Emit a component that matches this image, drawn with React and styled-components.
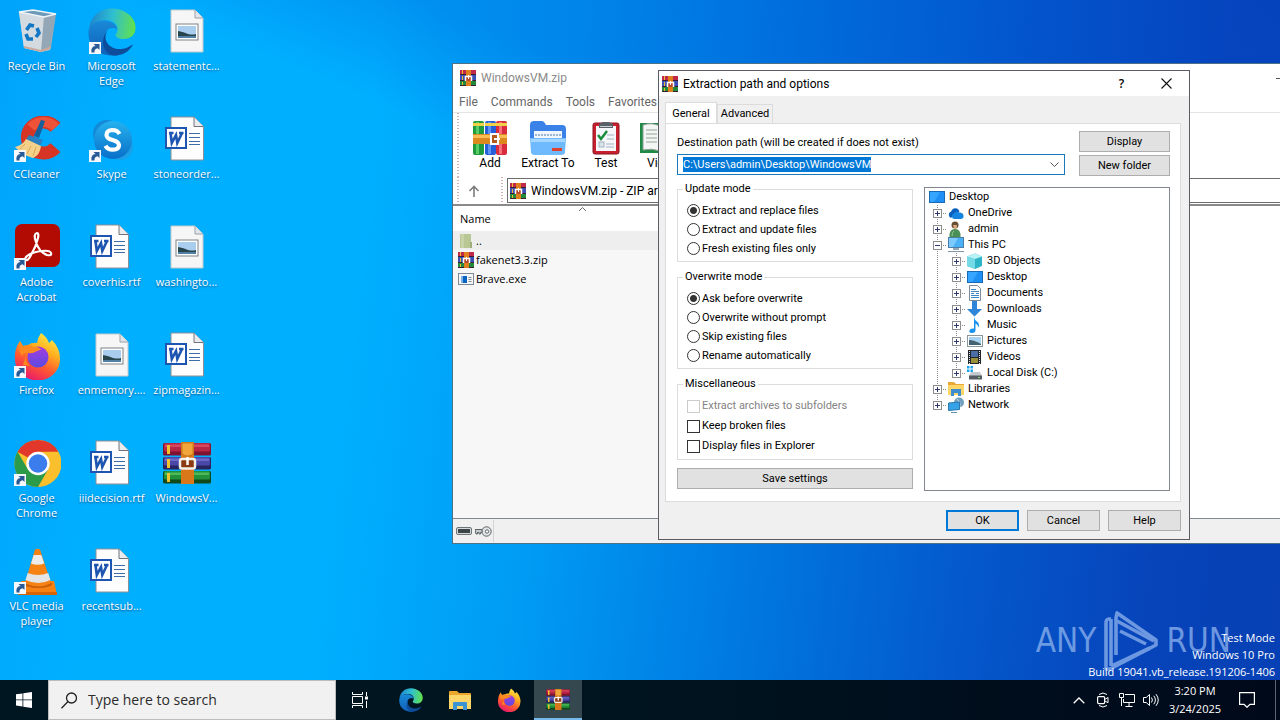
import React, { useEffect, useId, useRef } from "react";
import styled, { createGlobalStyle, css } from "styled-components";

const ui = `Roboto, "Noto Sans", sans-serif`;
const shell = `"Open Sans", "Noto Sans", sans-serif`;

const Global = createGlobalStyle`
  *, *::before, *::after { box-sizing: border-box; }
  body { margin: 0; font: 11px/16px ${ui}; color: #000; overflow: hidden; }
  button, input { font: inherit; color: inherit; margin: 0; }
  svg { display: block; flex: none; }
  ::selection { background: #0078d7; color: #fff; }
`;

/* ---------- desktop ---------- */

const Screen = styled.div`
  position: relative;
  height: 100vh;
  overflow: hidden;
  display: flex;
  flex-direction: column;
  background:
    linear-gradient(22deg, rgba(0, 80, 210, 0) 62%, rgba(0, 80, 210, 0.3) 72%, rgba(0, 70, 200, 0.3) 100%),
    linear-gradient(97deg, #00a4fb 0%, #00b0ff 12%, #00b0ff 28%, #009cf4 43%, #0078e0 60%, #0458cc 76%, #0743b9 90%, #0640b4 100%);
`;

const IconGrid = styled.main`
  flex: 1;
  display: grid;
  grid-auto-flow: column;
  grid-template-rows: repeat(6, 108px);
  grid-auto-columns: 75px;
  justify-content: start;
  align-content: start;
`;

const Shortcut = styled.a`
  display: flex;
  flex-direction: column;
  align-items: center;
  gap: 2px;
  padding: 8px 2px 0 0;
  color: #fff;
  text-decoration: none;
  text-align: center;
  font: 11px/15px ${shell};
  text-shadow: 0 1px 2px rgba(0, 40, 90, 0.7);
`;

/* ---------- desktop icon drawings ---------- */

const Arrow = () => (
  <g>
    <rect x="1" y="34" width="12" height="12" fill="#f4f8fc" />
    <path d="M3.500 44.500q-1-6 4-6.500L5.500 36h6v6l-1.800-1.800q-3.500.5-3.200 4.300z" fill="#2a5a96" />
  </g>
);

const Recycle = () => (
  <svg width="48" height="48" viewBox="0 0 48 48">
    <path d="M6 4L42 8 37 42 28 44 11 40z" fill="#c3ccd4" />
    <path d="M6 4L31 9 28 44 11 40z" fill="#d3dae0" />
    <path d="M31 9L43 6 38 40 28 44z" fill="#93a7b6" />
    <path d="M6 4L20 2 43 6 31 9z" fill="#6d9ab8" stroke="#eef4f8" strokeWidth="1.500" />
    <path d="M11 38l17 4 10-4-.5 3L28 44l-17-4z" fill="#c8a99a" />
    <g fill="none" stroke="#1277c4" strokeWidth="3.600">
      <path d="M13.500 22l3.500-5 4 1" />
      <path d="M24 20l2 5-3 4" />
      <path d="M20 31h-5l-2-5" />
    </g>
  </svg>
);

const EdgeShape = () => {
  const id = useId();
  return (
    <g>
      <defs>
        <linearGradient id={id + "a"} x1="0" y1=".3" x2="1" y2=".4">
          <stop offset="0" stopColor="#1d84cf" /><stop offset=".5" stopColor="#2fbfd0" /><stop offset="1" stopColor="#62e04e" />
        </linearGradient>
        <linearGradient id={id + "b"} x1="0" y1="0" x2="0" y2="1">
          <stop offset="0" stopColor="#1a8ad8" /><stop offset="1" stopColor="#0f5fb8" />
        </linearGradient>
      </defs>
      <path d="M1 22C2 8 12 .5 24 .5S48 9 47.500 20c0 7-5 11-12 11-5 0-8-2-8-4 0-1 2-2 2-6 0-5-5-9-11-9C10 12 3 16 1 22z" fill={`url(#${id}a)`} />
      <path d="M.5 24c0-7 7-11.500 16-11.500 6 0 12 3.500 13 9-8-4-13 1-13 9 0 9 6 15 14 17C12 49 0 40 .5 24z" fill={`url(#${id}b)`} />
      <path d="M20 22c-7 10 2 20 13 19 5 0 9-3 12-4.500-4 8-12 11.500-20 10.800-10-2.300-14-15.300-5-25.300z" fill="#0d4d9b" />
    </g>
  );
};

const Edge = ({ size = 48, badge }) => (
  <svg width={size} height={size} viewBox="0 0 48 48"><EdgeShape />{badge && <Arrow />}</svg>
);

const CCleaner = () => (
  <svg width="48" height="48" viewBox="0 0 48 48">
    <path d="M42.500 11.400A16 15.500 0 1 0 42.500 31.600" fill="none" stroke="#d63424" strokeWidth="13" />
    <path d="M42.500 11.400A16 15.500 0 0 0 18 11.500" fill="none" stroke="#ee5238" strokeWidth="10" />
    <path d="M28 4l4 1-6 17-5-2z" fill="#15609c" />
    <path d="M16 19l14 5-3 6-14-6z" fill="#2a7fc0" />
    <path d="M13 23l15 7q-1 9-8 12Q9 39 2 31q8-2 11-8z" fill="#f5d089" />
    <path d="M12 28l-5 5M18 30l-4 8M23 31l-3 9" stroke="#d9a95c" />
    <Arrow />
  </svg>
);

const Skype = () => {
  const id = useId();
  return (
    <svg width="48" height="48" viewBox="0 0 48 48">
      <defs>
        <linearGradient id={id} x1="0" y1="0" x2="0" y2="1">
          <stop offset="0" stopColor="#25b1ee" /><stop offset="1" stopColor="#0a6fc9" />
        </linearGradient>
      </defs>
      <circle cx="19" cy="18" r="14" fill="#1389d8" /><circle cx="32" cy="31" r="13" fill="#1aa0e6" />
      <circle cx="25" cy="24" r="19" fill={`url(#${id})`} />
      <path d="M31.500 18q-2-4-7-4-6 .3-6 5 0 3.500 6 5t6.500 5q0 4.500-6 4.700-5.500 0-7.500-4" fill="none" stroke="#fff" strokeWidth="4.200" />
      <Arrow />
    </svg>
  );
};

const Acrobat = () => (
  <svg width="48" height="48" viewBox="0 0 48 48">
    <rect x="2" y="0" width="45" height="43" rx="7" fill="#b10b04" />
    <path d="M24 9q-4 1-1 9 3 10 11 13 5 1 4-2t-9-2q-10 1-15 5-3 3-1 4t5-5Q23 23 25 14q1-5-1-5z" fill="none" stroke="#fff" strokeWidth="2.200" />
    <Arrow />
  </svg>
);

const FirefoxShape = () => {
  const id = useId();
  return (
    <g>
      <defs>
        <linearGradient id={id + "a"} x1=".8" y1="0" x2=".3" y2="1">
          <stop offset="0" stopColor="#fff04a" /><stop offset=".35" stopColor="#ffb01f" /><stop offset=".65" stopColor="#ff5a30" /><stop offset="1" stopColor="#e8156f" />
        </linearGradient>
        <linearGradient id={id + "b"} x1="0" y1="0" x2="0" y2="1">
          <stop offset="0" stopColor="#a43ce0" /><stop offset="1" stopColor="#5a4be0" />
        </linearGradient>
      </defs>
      <path d="M28 1q6 4 8 10l3-3q8 8 8 19A22.500 21 0 0 1 2 28Q1 17 7 9l3 5 5-1q4-3 9-2Q25 5 28 1z" fill={`url(#${id}a)`} />
      <circle cx="25" cy="25" r="10.500" fill={`url(#${id}b)`} />
      <path d="M7 9q-3 9 2 15 2-4 7-3 3 1 8-2 4-1 4-2-4-3-8-2-2-2-5-2l-5 1zM13 24q-1 6 4 10l-7-1z" fill="#ff8a1f" />
    </g>
  );
};

const Firefox = ({ size = 48, badge }) => (
  <svg width={size} height={size} viewBox="0 0 48 48"><FirefoxShape />{badge && <Arrow />}</svg>
);

const Chrome = () => (
  <svg width="48" height="48" viewBox="0 0 48 48">
    <circle cx="25" cy="23.500" r="23.500" fill="#f9bf2c" />
    <path d="M25 0A23.500 23.500 0 0 1 45.400 11.800H25L14.800 17.600 4.600 11.800A23.500 23.500 0 0 1 25 0z" fill="#e1382b" />
    <path d="M4.600 11.800A23.500 23.500 0 0 0 25 47L35.200 29.300 25 35.200 14.800 29.300z" fill="#2b9b49" />
    <circle cx="25" cy="23.500" r="11.700" fill="#fff" /><circle cx="25" cy="23.500" r="9.300" fill="#3b7ded" />
    <Arrow />
  </svg>
);

const Vlc = () => (
  <svg width="48" height="48" viewBox="0 0 48 48">
    <path d="M8 33h33l3 14H5z" fill="#f58213" /><path d="M5 44h39v3H5z" fill="#d96405" />
    <ellipse cx="25" cy="36" rx="14" ry="4" fill="#c95d0a" />
    <path d="M22 1.500q2.500-1.500 5 0L38 35q-12 7-26 0z" fill="#f58213" />
    <path d="M20.700 7h7.600l3 8.500q-6.500 2.500-13.300 0z" fill="#ececec" />
    <path d="M14.700 25q10 4 20.500 0l2.300 7q-12 6-25 0z" fill="#e4e4e4" />
    <Arrow />
  </svg>
);

const WordDoc = () => (
  <svg width="48" height="48" viewBox="0 0 48 48">
    <path d="M8 1h23l9.500 9.500V44H8z" fill="#fdfdfd" stroke="#8b8f96" />
    <path d="M31 1v9.500h9.500" fill="#e9ebee" stroke="#6f747c" />
    <rect x="3" y="12" width="20" height="20" fill="#fff" stroke="#1d55b0" strokeWidth="2" />
    <path d="M7.500 17l1.300 10 4.200-8 1.300 8 4.700-10M6 17h4.500M16 17h4.500" fill="none" stroke="#1d55b0" strokeWidth="2.600" />
    <path d="M26 17.500h11M26 21.500h11M26 25.500h11M26 28.500h11" stroke="#3f6da8" />
  </svg>
);

const PictureDoc = () => (
  <svg width="48" height="48" viewBox="0 0 48 48">
    <path d="M8 2h24l8 8v34H8z" fill="#f6f6f6" stroke="#c3c8cc" />
    <path d="M32 2v8h8" fill="#e2e6ea" stroke="#9aa1a8" />
    <rect x="13" y="16" width="22" height="16" fill="#fff" stroke="#7a8288" />
    <rect x="15" y="18" width="18" height="12" fill="#a9cdee" />
    <path d="M15 23q6 1 10 3 5 1 8 0v4H15z" fill="#28454d" /><path d="M15 28h18v2H15z" fill="#527fa4" />
  </svg>
);

const Books = () => (
  <g>
    {[["#7f1230", "#b82645", "#d8485f", 3], ["#27245f", "#4a47a8", "#6c69c8", 17], ["#11491d", "#23903a", "#4fb95a", 31]].map(([dark, mid, light, y]) => (
      <g key={y}>
        <rect x="0" y={y} width="48" height="12.500" rx="1.500" fill={dark} />
        <rect x="1" y={y} width="46" height="8.500" rx="1.500" fill={mid} />
        <rect x="2" y={y + 1.500} width="44" height="2.500" fill={light} />
        <rect x="4" y={y + 2} width="3" height="9" fill="#f2c12e" />
      </g>
    ))}
    <rect x="18" y="2" width="13" height="42" fill="#d9781b" />
    <path d="M19 3h11v11q-5.500 4-11 0z" fill="#f0a63a" stroke="#c87a1c" />
    <rect x="17" y="19" width="15" height="9.500" rx="2" fill="#8b3a12" stroke="#f2eee8" strokeWidth="2.500" />
    <path d="M24.500 17v8" stroke="#fff" strokeWidth="2.500" />
  </g>
);

const Rar = ({ size = 48 }) => (
  <svg width={size} height={size} viewBox="0 0 48 48"><Books /></svg>
);

const RarSmall = ({ size = 16 }) => (
  <svg width={size} height={size} viewBox="0 0 16 16">
    <rect width="16" height="5" fill="#c02a48" /><rect y="5" width="16" height="6" fill="#3b4fb4" /><rect y="11" width="16" height="5" fill="#228a3a" />
    <path d="M0 4.500h16M0 10.500h16M0 15.500h16" stroke="#3a1c34" />
    <path d="M2.500 0v4M2.500 6v4M2.500 12v3" stroke="#f0c030" />
    <rect x="6" width="5" height="16" fill="#e0801c" />
    <path d="M5.500 11V6.500h6V11" fill="#b5482a" stroke="#fff" strokeWidth="1.500" /><path d="M8.500 5v4" stroke="#fff" />
  </svg>
);

/* ---------- archive window ---------- */

const ArchiveWindow = styled.section`
  position: absolute;
  left: 452px;
  right: -25px;
  top: 63px;
  height: 481px;
  display: flex;
  flex-direction: column;
  background: #fff;
  border: 1px solid #4f7186;
  font: 12px/16px ${ui};
`;

const WinTitle = styled.header`
  display: flex;
  align-items: center;
  height: 28px;
  padding-left: 7px;
  gap: 5px;
  color: #8a8a8a;
`;

const Minimise = styled.button`
  margin-left: auto;
  width: 46px;
  height: 28px;
  border: 0;
  padding: 0 18px;
  background: none;
`;

const MenuBar = styled.nav`
  display: flex;
  gap: 13px;
  height: 21px;
  padding: 2px 6px 2px;
  border-bottom: 1px solid #e4e4e4;
  button { border: 0; padding: 0; background: none; color: #666; }
`;

const grip = css`
  background-image: repeating-linear-gradient(#d2b4b4 0 1px, #fff 1px 3px);
  background-repeat: no-repeat;
`;

const Toolbar = styled.div`
  ${grip}
  background-size: 2px 100%;
  background-position: 4px 0;
  display: flex;
  align-items: flex-start;
  height: 64px;
  padding: 8px 0 0 10px;
`;

const Tool = styled.button`
  width: ${(p) => (p.$wide ? 62 : 54)}px;
  display: flex;
  flex-direction: column;
  align-items: center;
  padding: 0;
  border: 0;
  background: none;
  white-space: nowrap;
`;

const AddressRow = styled.div`
  ${grip}
  background-size: 2px 100%, 2px 100%;
  background-image: repeating-linear-gradient(#d2b4b4 0 1px, #fff 1px 3px), repeating-linear-gradient(#d2b4b4 0 1px, #fff 1px 3px);
  background-position: 4px 0, 48px 0;
  display: flex;
  align-items: center;
  height: 27px;
`;

const UpButton = styled.button`
  width: 54px;
  display: flex;
  justify-content: center;
  padding: 0 12px 0 0;
  border: 0;
  background: none;
`;

const Address = styled.div`
  flex: 1;
  display: flex;
  align-items: center;
  gap: 5px;
  height: 25px;
  padding-left: 2px;
  border: 1px solid #6d6d6d;
  input { flex: 1; border: 0; padding: 0; background: none; outline: none; }
`;

const FileArea = styled.div`
  flex: 1;
  border-top: 2px solid #8a8a8a;
  border-bottom: 1px solid #828790;
  background: linear-gradient(90deg, #f7f7f7 260px, #fff 260px);
`;

const FileTable = styled.table`
  width: 260px;
  border-collapse: collapse;
  font: 11px/19px ${shell};
  th { position: relative; height: 25px; padding: 0 0 0 7px; text-align: left; font-weight: 400; background: #fff; }
  th svg { position: absolute; left: 125px; top: 0; }
  td { height: 19px; padding: 0 0 0 5px; }
  td > span { display: flex; align-items: center; gap: 2px; }
`;

const FileRow = styled.tr`
  background: ${(p) => (p.$active ? "#eeeeee" : "none")};
`;

const StatusBar = styled.footer`
  display: flex;
  align-items: center;
  height: 24px;
  background: #f0f0f0;
`;

const StatusIcons = styled.div`
  display: flex;
  align-items: center;
  gap: 3px;
  height: 22px;
  padding: 0 1px 0 3px;
  border-right: 1px solid #d4d4d4;
`;

const AddIcon = () => (
  <svg width="34" height="34" viewBox="0 0 34 34">
    {[["#1f9a3c", "#6fe27a", 0], ["#2560d8", "#76a8ff", 12], ["#d92b3c", "#ff8f97", 23]].map(([a, b, x]) => (
      <g key={x}><rect x={x} width="11" height="34" rx="2" fill={a} /><rect x={x + 3} y="1" width="3" height="32" fill={b} opacity=".7" /><rect x={x} y="2" width="11" height="3" fill="#f0d048" /></g>
    ))}
    <rect y="13" width="34" height="10" fill="#dc8a1f" /><path d="M0 14h34v3H0z" fill="#f8bd55" />
    <path d="M18 13h7v10h-7z" fill="#b05a1d" stroke="#fff" strokeWidth="2" /><path d="M21 18h6" stroke="#fff" strokeWidth="2" />
  </svg>
);

const ExtractIcon = () => (
  <svg width="36" height="34" viewBox="0 0 36 34">
    <path d="M0 4q0-4 4-4h8q2 0 4 4h16q4 0 4 4v10H0z" fill="#3b82e8" />
    <rect x="4" y="10" width="28" height="12" fill="#f1f6fd" /><path d="M5 14h26" stroke="#9db5d2" strokeWidth="2" strokeDasharray="2 1" />
    <path d="M0 17h36l-1 14q0 3-4 3H5q-4 0-4-3z" fill="#6fbaff" /><path d="M1 18h34v3H1z" fill="#a5d6ff" /><rect x="22" y="27" width="10" height="3" fill="#e0402c" />
  </svg>
);

const TestIcon = () => (
  <svg width="28" height="34" viewBox="0 0 28 34">
    <rect x="1" y="2" width="26" height="31" rx="2" fill="#c7202f" stroke="#8e1220" />
    <rect x="4" y="5" width="20" height="25" fill="#f5f7fa" />
    <path d="M7 7V3l4-2h6l4 2v4z" fill="#5a6068" /><path d="M8 5.500h12" stroke="#c9cfd6" />
    <path d="M6 14l3 4 6-8" fill="none" stroke="#1c8a3b" strokeWidth="2.500" />
    <path d="M15 14h7M15 18h7M14 23h8M14 26h8" stroke="#a5b2c0" /><rect x="7" y="21" width="5" height="5" fill="#dbe3ea" stroke="#a5b2c0" />
  </svg>
);

const ViewIcon = () => (
  <svg width="40" height="34" viewBox="0 0 40 34">
    <path d="M0 2h40v30H0z" fill="#1f8a46" /><path d="M3 4q9-3 17 1v25q-8-3-17-1zM37 4q-9-3-17 1v25q8-3 17-1z" fill="#f3f6f4" stroke="#8fa097" />
    <path d="M6 9h11M6 13h11M6 17h11M6 21h11M23 9h11M23 13h11M23 17h11" stroke="#93a39b" />
  </svg>
);

const FolderUp = () => (
  <svg width="16" height="16" viewBox="0 0 16 16"><path d="M2 1h11v14H2z" fill="#b9c795" /><path d="M3 1h3v14H3z" fill="#c8d3a8" /><path d="M12 9h2v6h-2z" fill="#9db07a" /></svg>
);

const ExeIcon = () => (
  <svg width="16" height="16" viewBox="0 0 16 16">
    <rect x=".5" y="2.500" width="15" height="11" fill="#f4f6f8" stroke="#7f8a94" /><rect x="3" y="5" width="6" height="7" fill="#0a63c0" /><path d="M3 5h2v7H3z" fill="#7fb3e6" /><path d="M10.500 6.500h3M10.500 8.500h3M10.500 10.500h3" stroke="#7d8993" />
  </svg>
);

const tools = [["Add", AddIcon], ["Extract To", ExtractIcon, true], ["Test", TestIcon], ["View", ViewIcon]];
const files = [["..", FolderUp], ["fakenet3.3.zip", RarSmall], ["Brave.exe", ExeIcon]];

const Archive = () => (
  <ArchiveWindow aria-label="WindowsVM.zip">
    <WinTitle>
      <RarSmall /><span>WindowsVM.zip</span>
      <Minimise aria-label="Minimise"><svg width="10" height="1" viewBox="0 0 10 1"><rect width="10" height="1" fill="#555" /></svg></Minimise>
    </WinTitle>
    <MenuBar>{["File", "Commands", "Tools", "Favorites"].map((m) => <button key={m}>{m}</button>)}</MenuBar>
    <Toolbar>
      {tools.map(([name, Icon, wide]) => <Tool key={name} $wide={wide}><Icon />{name}</Tool>)}
    </Toolbar>
    <AddressRow>
      <UpButton aria-label="Up one level">
        <svg width="12" height="12" viewBox="0 0 12 12"><path d="M6 12V1.500M1.500 6L6 1.500 10.500 6" fill="none" stroke="#7c7c7c" strokeWidth="1.600" /></svg>
      </UpButton>
      <Address><RarSmall /><input aria-label="Archive path" readOnly tabIndex={-1} value="WindowsVM.zip - ZIP archive" /></Address>
    </AddressRow>
    <FileArea>
      <FileTable>
        <thead><tr><th>Name<svg width="9" height="6" viewBox="0 0 9 6"><path d="M1 5l3.500-3.500L8 5" fill="none" stroke="#666" /></svg></th></tr></thead>
        <tbody>
          {files.map(([name, Icon], i) => <FileRow key={name} $active={i === 0}><td><span><Icon />{name}</span></td></FileRow>)}
        </tbody>
      </FileTable>
    </FileArea>
    <StatusBar>
      <StatusIcons>
        <svg width="16" height="8" viewBox="0 0 16 8"><rect x=".5" y=".5" width="15" height="7" rx="1.500" fill="#d5dadd" stroke="#6d7478" /><rect x="2" y="2" width="12" height="4" fill="#3d4448" /></svg>
        <svg width="17" height="11" viewBox="0 0 17 11"><circle cx="11.500" cy="5.500" r="4.700" fill="#e2e5e7" stroke="#5c6367" /><circle cx="12" cy="5.500" r="1.700" fill="#fff" stroke="#5c6367" /><path d="M0 3.500h7v3H5.500V8H4V6.500H2.500V8H1z" fill="#c6cbce" stroke="#5c6367" /></svg>
      </StatusIcons>
    </StatusBar>
  </ArchiveWindow>
);

/* ---------- extraction dialog ---------- */

const DialogWindow = styled.section`
  position: absolute;
  left: 658px;
  top: 70px;
  width: 532px;
  height: 470px;
  display: flex;
  flex-direction: column;
  background: #f0f0f0;
  border: 1px solid #5b5b63;
`;

const DialogTitle = styled.header`
  display: flex;
  align-items: center;
  height: 25px;
  padding-left: 3px;
  background: #fff;
  font-size: 12px;
  span { margin-left: 5px; }
`;

const TitleButton = styled.button`
  width: 45px;
  height: 24px;
  display: flex;
  align-items: center;
  justify-content: center;
  border: 0;
  padding: 0;
  background: none;
  font: 600 12px/16px ${shell};
  &:first-of-type { margin-left: auto; }
`;

const Body = styled.div`
  flex: 1;
  display: flex;
  flex-direction: column;
  padding: 6px 8px 8px 6px;
`;

const Tabs = styled.div`
  display: flex;
  align-items: flex-end;
`;

const Tab = styled.button`
  height: ${(p) => (p.$on ? 22 : 19)}px;
  width: ${(p) => (p.$on ? 52 : 56)}px;
  margin-bottom: ${(p) => (p.$on ? "-1px" : "0")};
  padding: 0;
  border: 1px solid #dcdcdc;
  border-bottom-width: 0;
  background: ${(p) => (p.$on ? "#fff" : "#f0f0f0")};
`;

const Page = styled.div`
  flex: 1;
  display: flex;
  flex-direction: column;
  gap: 6px;
  padding: 7px 10px 10px 11px;
  border: 1px solid #dcdcdc;
  background: #fff;
`;

const PathRow = styled.div`
  display: flex;
  gap: 14px;
`;

const PathField = styled.div`
  flex: 1;
  display: flex;
  flex-direction: column;
  gap: 3px;
  padding-top: 4px;
`;

const Combo = styled.div`
  display: flex;
  align-items: center;
  height: 21px;
  padding: 0 1px 0 5px;
  border: 1px solid #1a78bd;
  input { flex: 1; border: 0; padding: 0; height: 15px; background: none; outline: none; }
  button { display: flex; border: 0; padding: 4px; background: none; }
`;

const Stack = styled.div`
  display: flex;
  flex-direction: column;
  gap: 3px;
  width: 91px;
`;

const PushButton = styled.button`
  height: 21px;
  padding: 0;
  border: ${(p) => (p.$primary ? "2px solid #0078d7" : "1px solid #adadad")};
  background: #e1e1e1;
`;

const Columns = styled.div`
  flex: 1;
  display: flex;
  gap: 11px;
`;

const Options = styled.div`
  width: 236px;
  display: flex;
  flex-direction: column;
  gap: 8px;
`;

const Group = styled.fieldset`
  margin: 0;
  padding: 5px 9px 3px;
  border: 1px solid #dcdcdc;
  legend { padding: 0 2px; margin-left: -4px; line-height: 14px; }
`;

const Choice = styled.label`
  display: flex;
  align-items: center;
  gap: 2px;
  height: ${(p) => (p.$tall ? 20 : 19)}px;
  color: ${(p) => (p.$off ? "#838383" : "#000")};
`;

const Mark = styled.input`
  appearance: none;
  width: 13px;
  height: 13px;
  border: 1px solid #333;
  border-radius: ${(p) => (p.type === "radio" ? "50%" : "0")};
  background: #fff;
  &:checked { background: radial-gradient(circle, #333 3px, #fff 4px); }
  &:disabled { border-color: #ccc; }
`;

const TreeWrap = styled.div`
  flex: 1;
  display: flex;
  padding-top: 5px;
`;

const Tree = styled.ul`
  flex: 1;
  margin: 0;
  padding: 1px 3px;
  border: 1px solid #828790;
  list-style: none;
`;

const Node = styled.li`
  display: flex;
  align-items: center;
  height: 16px;
  line-height: 18px;
  > svg { margin-right: 3px; }
`;

const dots = "repeating-linear-gradient(#8a8a8a 0 1px, transparent 1px 2px)";
const Branch = styled.span`
  width: 19px;
  height: 16px;
  display: flex;
  align-items: center;
  padding-left: 5px;
  background:
    ${dots} 9px 0 / 1px ${(p) => (p.$last ? "8px" : "100%")} no-repeat
    ${(p) => (p.$line ? "" : ", repeating-linear-gradient(90deg, #8a8a8a 0 1px, transparent 1px 2px) 9px 8px / 10px 1px no-repeat")};
`;

const Toggle = styled.button`
  display: flex;
  border: 0;
  padding: 1px 0 0;
  background: none;
`;

const Expander = ({ open, label }) => (
  <Toggle aria-label={(open ? "Collapse " : "Expand ") + label} aria-expanded={!!open}>
    <svg width="9" height="9" viewBox="0 0 9 9"><rect x=".5" y=".5" width="8" height="8" fill="#fff" stroke="#8d8d8d" /><path d={open ? "M2 4.500h5" : "M2 4.500h5M4.500 2v5"} stroke="#303a70" /></svg>
  </Toggle>
);

const glyphs = {
  desktop: <><rect x="1.500" y="2.500" width="15" height="11" fill="#1e90f5" stroke="#176ab5" /><path d="M2 3h10L6 13H2z" fill="#35a5ff" /></>,
  onedrive: <><path d="M4 13a3.500 3.500 0 0 1 0-6.500Q6 2 10 3.500q2 1 2.500 3L8 9z" fill="#0a5fbd" /><path d="M7 14a3 3 0 0 1-.5-5.500Q9 5.500 12.500 7.500q3.500 0 4 3 .5 3-2.500 3.500z" fill="#1484e0" /></>,
  user: <><circle cx="8" cy="4" r="3.500" fill="#6a4d35" /><path d="M6 4h4q0 4-1.500 4.500T6 4z" fill="#d9a97e" /><path d="M2.500 16q-.5-8 5.500-8t5.500 8z" fill="#4a8f55" /><path d="M5 15q0-4 2-5" stroke="#8cc794" fill="none" /></>,
  pc: <><rect x="1.500" y=".5" width="15" height="10" fill="#4bb0f5" stroke="#4b7fa8" /><path d="M2 1h9l-5 9H2z" fill="#7ccaff" /><path d="M6 11h6v2H6z" fill="#9aa8b3" /><path d="M1 14.500h16" stroke="#8497a4" /></>,
  cube: <><path d="M1 3.500L9 .5l7 3v9.500l-7 3-8-3z" fill="#2db3c6" /><path d="M1 3.500L9 6v10l-8-3z" fill="#74dbe6" /><path d="M1 3.500L9 .5l7 3L9 6z" fill="#b7f2f5" /></>,
  doc: <><path d="M3.500.5h8l3 3v12h-11z" fill="#fdfdfd" stroke="#7d8b96" /><path d="M5 4.500h5M5 6.500h8M5 8.500h3M10 8.500h3M5 10.500h8M5 12.500h8" stroke="#3b87c8" /></>,
  down: <path d="M6 0h5v8h5L8.500 15.500 1 8h5z" fill="#2f86d8" />,
  music: <path d="M8 0q.5 3 3 4.500 3 2.500 1.500 6-.5-3-3-4v6.500q0 3-3.500 3t-2.500-2.500Q4 11 8 11.500z" fill="#1b93ee" />,
  picture: <><rect x="1.500" y="2.500" width="15" height="11" fill="#fff" stroke="#8b979f" /><rect x="3" y="4" width="12" height="8" fill="#a8d2f0" /><path d="M3 7q5 0 12 4v1H3z" fill="#43616f" /></>,
  film: <><rect x="2" y="1" width="13" height="14" fill="#23262c" /><rect x="5" y="2" width="7" height="6" fill="#4b6fa5" /><rect x="5" y="9" width="7" height="5" fill="#9a8f3a" /><path d="M3.500 2v13M13.500 2v13" stroke="#e8e8e8" strokeDasharray="1 1" /></>,
  disk: <><path d="M1 1h2.500v2.500H1zM4.500 1H7v2.500H4.500zM1 4.500h2.500V7H1zM4.500 4.500H7V7H4.500z" fill="#1aa5f0" /><path d="M5 7h9l2 4H3z" fill="#c4c9cd" /><path d="M3 10.500h13v4H3z" fill="#555c62" /><rect x="12" y="12" width="2" height="1" fill="#6fe06f" /></>,
  library: <><path d="M1 1h6l2 2h8v11H1z" fill="#e9a838" /><path d="M1 4h16v10H1z" fill="#fcd667" /><path d="M4 15V8h10v7h-3v-3H7v3z" fill="#3d8ed0" /></>,
  network: <><circle cx="12" cy="5.500" r="5" fill="#6f9fbc" /><path d="M10 2q4 3 3 8" stroke="#c6dfec" fill="none" /><path d="M1.500 6l11-1v7.500l-11 1z" fill="#35a3e8" stroke="#2c77ab" /><path d="M4 15.500h6" stroke="#5d8fae" /></>,
};

const Glyph = ({ name }) => <svg width="18" height="16" viewBox="0 0 18 16">{glyphs[name]}</svg>;

const tree = [
  [0, "Desktop", "desktop"], [1, "OneDrive", "onedrive"], [1, "admin", "user"], [1, "This PC", "pc", { open: true }],
  [2, "3D Objects", "cube"], [2, "Desktop", "desktop"], [2, "Documents", "doc"], [2, "Downloads", "down"], [2, "Music", "music"],
  [2, "Pictures", "picture"], [2, "Videos", "film"], [2, "Local Disk (C:)", "disk", { last: true }],
  [1, "Libraries", "library"], [1, "Network", "network", { last: true }],
];

const OptionGroup = ({ title, type, items }) => (
  <Group>
    <legend>{title}</legend>
    {items.map(([text, state], i) => (
      <Choice key={text} $off={state === "off"} $tall={type === "checkbox"}>
        <Mark type={type} name={title} defaultChecked={type === "radio" && i === 0} disabled={state === "off"} />{text}
      </Choice>
    ))}
  </Group>
);

const Buttons = styled.footer`
  display: flex;
  justify-content: flex-end;
  gap: 8px;
  padding-top: 8px;
  button { width: 73px; }
`;

const Dialog = () => {
  const path = useRef(null);
  useEffect(() => { path.current.focus(); path.current.select(); }, []);
  return (
    <DialogWindow role="dialog" aria-label="Extraction path and options">
      <DialogTitle>
        <RarSmall /><span>Extraction path and options</span>
        <TitleButton aria-label="Help">?</TitleButton>
        <TitleButton aria-label="Close"><svg width="11" height="11" viewBox="0 0 11 11"><path d="M.5.5l10 10M10.500.5l-10 10" stroke="#111" strokeWidth="1.100" /></svg></TitleButton>
      </DialogTitle>
      <Body>
        <Tabs role="tablist">
          <Tab role="tab" aria-selected="true" $on>General</Tab>
          <Tab role="tab" aria-selected="false">Advanced</Tab>
        </Tabs>
        <Page>
          <PathRow>
            <PathField>
              <label htmlFor="path">Destination path (will be created if does not exist)</label>
              <Combo>
                <input id="path" ref={path} defaultValue={"C:\\Users\\admin\\Desktop\\WindowsVM"} />
                <button aria-label="Recent paths" tabIndex={-1}><svg width="9" height="6" viewBox="0 0 9 6"><path d="M.5.500l4 4 4-4" fill="none" stroke="#555" /></svg></button>
              </Combo>
            </PathField>
            <Stack><PushButton>Display</PushButton><PushButton>New folder</PushButton></Stack>
          </PathRow>
          <Columns>
            <Options>
              <OptionGroup title="Update mode" type="radio" items={[["Extract and replace files"], ["Extract and update files"], ["Fresh existing files only"]]} />
              <OptionGroup title="Overwrite mode" type="radio" items={[["Ask before overwrite"], ["Overwrite without prompt"], ["Skip existing files"], ["Rename automatically"]]} />
              <OptionGroup title="Miscellaneous" type="checkbox" items={[["Extract archives to subfolders", "off"], ["Keep broken files"], ["Display files in Explorer"]]} />
              <PushButton>Save settings</PushButton>
            </Options>
            <TreeWrap>
              <Tree>
                {tree.map(([depth, name, icon, opt = {}], i) => (
                  <Node key={i}>
                    {depth === 2 && <Branch $line />}
                    {depth > 0 && <Branch $last={opt.last}><Expander open={opt.open} label={name} /></Branch>}
                    <Glyph name={icon} />{name}
                  </Node>
                ))}
              </Tree>
            </TreeWrap>
          </Columns>
        </Page>
        <Buttons><PushButton $primary>OK</PushButton><PushButton>Cancel</PushButton><PushButton>Help</PushButton></Buttons>
      </Body>
    </DialogWindow>
  );
};

/* ---------- watermark ---------- */

const BuildInfo = styled.aside`
  position: absolute;
  right: 5px;
  bottom: 40px;
  color: #fff;
  text-align: right;
  font: 11px/17px ${shell};
`;

const Brand = styled.div`
  position: absolute;
  right: 49px;
  bottom: 48px;
  display: flex;
  align-items: center;
  gap: 8px;
  color: #8fb4ee;
  opacity: 0.75;
  font: 33px/62px "DejaVu Sans Condensed", "DejaVu Sans", sans-serif;
`;

/* ---------- taskbar ---------- */

const Taskbar = styled.footer`
  display: flex;
  height: 40px;
  background: linear-gradient(90deg, #001722 0%, #00141f 50%, #00091a 100%);
  color: #fff;
  font: 11px/18px ${shell};
`;

const TaskButton = styled.button`
  width: 48px;
  display: flex;
  align-items: center;
  justify-content: center;
  margin-right: 1px;
  padding: 0;
  border: 0;
  border-bottom: 2px solid ${(p) => (p.$active ? "#76b9ed" : "transparent")};
  border-top: 2px solid transparent;
  background: ${(p) => (p.$active ? "#35474f" : "none")} border-box;
`;

const StartButton = styled(TaskButton)`margin-right: 0;`;
const ViewButton = styled(TaskButton)`margin-right: 3px;`;

const Search = styled.label`
  width: 288px;
  display: flex;
  align-items: center;
  gap: 11px;
  padding-left: 12px;
  border: 1px solid #bdbdbd;
  background: #f1f1f1;
  input { flex: 1; min-width: 0; border: 0; padding: 0; background: none; outline: none; font: 14px/20px ${shell}; }
  input::placeholder { color: #2b2b2b; opacity: 1; }
`;

const Tray = styled.div`
  margin-left: auto;
  display: flex;
  align-items: center;
`;

const TrayButton = styled.button`
  width: ${(p) => p.$w || 24}px;
  height: 40px;
  display: flex;
  align-items: center;
  justify-content: center;
  padding: 0;
  border: 0;
  background: none;
`;

const Clock = styled.time`
  width: 56px;
  margin-left: 4px;
  text-align: center;
`;

const ShowDesktop = styled.button`
  width: 5px;
  height: 40px;
  margin-left: 4px;
  padding: 0;
  border: 0;
  border-left: 1px solid #5b6670;
  background: none;
`;

const shortcuts = [
  ["Recycle Bin", <Recycle />], ["CCleaner", <CCleaner />], ["Adobe Acrobat", <Acrobat />], ["Firefox", <Firefox badge />], ["Google Chrome", <Chrome />], ["VLC media player", <Vlc />],
  ["Microsoft Edge", <Edge badge />], ["Skype", <Skype />], ["coverhis.rtf", <WordDoc />], ["enmemory....", <PictureDoc />], ["iiidecision.rtf", <WordDoc />], ["recentsub...", <WordDoc />],
  ["statementc...", <PictureDoc />], ["stoneorder...", <WordDoc />], ["washingto...", <PictureDoc />], ["zipmagazin...", <WordDoc />], ["WindowsV...", <Rar />],
];

export default function App() {
  return (
    <>
      <Global />
      <Screen>
        <IconGrid>
          {shortcuts.map(([name, icon]) => <Shortcut key={name} href="#">{icon}<span>{name}</span></Shortcut>)}
        </IconGrid>
        <Brand>
          ANY
          <svg width="54" height="60" viewBox="0 0 54 60" fill="none" stroke="currentColor" strokeWidth="3.600" strokeLinejoin="round">
            <path d="M7 8H5q-3 0-3 4v46h4L52 34v-5L13 2l-1 5v37" />
            <path d="M7 8v47M13 10l37 20M16 20l26 13M8 55l38-18" />
          </svg>
          RUN
        </Brand>
        <BuildInfo>Test Mode<br />Windows 10 Pro<br />Build 19041.vb_release.191206-1406</BuildInfo>
        <Archive />
        <Dialog />
        <Taskbar>
          <StartButton aria-label="Start">
            <svg width="16" height="16" viewBox="0 0 16 16"><path d="M0 2.300l6.500-.9v6.100H0zM7.300 1.300L16 0v7.500H7.300zM0 8.300h6.500v6.200L0 13.600zM7.300 8.300H16V16l-8.700-1.300z" fill="#fff" /></svg>
          </StartButton>
          <Search>
            <svg width="16" height="17" viewBox="0 0 16 17"><circle cx="10.500" cy="6" r="5" fill="none" stroke="#222" strokeWidth="1.300" /><path d="M7 9.500L.5 16.200" stroke="#222" strokeWidth="1.300" /></svg>
            <input type="search" aria-label="Search" placeholder="Type here to search" />
          </Search>
          <ViewButton aria-label="Task view">
            <svg width="16" height="16" viewBox="0 0 16 16" fill="none" stroke="#fff"><path d="M.5 0v2.500h10V0M.5 16v-2.500h10V16M.5 4.500h10v7H.5zM14.500 0v4M14.500 9v7" /><rect x="13" y="4.500" width="3" height="3" fill="#fff" stroke="none" /></svg>
          </ViewButton>
          <TaskButton aria-label="Microsoft Edge"><Edge size={24} /></TaskButton>
          <TaskButton aria-label="File Explorer">
            <svg width="22" height="19" viewBox="0 0 22 19"><path d="M0 1q0-1 1-1h7l2 2h11q1 0 1 1v15H0z" fill="#eba72c" /><path d="M0 4h22v14H0z" fill="#fdd66a" /><path d="M4 19v-7q0-1 1-1h12q1 0 1 1v7h-4v-4H8v4z" fill="#3c93d3" /></svg>
          </TaskButton>
          <TaskButton aria-label="Firefox"><Firefox size={24} /></TaskButton>
          <TaskButton aria-label="WinRAR" $active><Rar size={24} /></TaskButton>
          <Tray>
            <TrayButton aria-label="Show hidden icons"><svg width="12" height="7" viewBox="0 0 12 7"><path d="M.7 6.300L6 1l5.300 5.300" fill="none" stroke="#fff" strokeWidth="1.300" /></svg></TrayButton>
            <TrayButton aria-label="Meet now"><svg width="12" height="16" viewBox="0 0 12 16" fill="none" stroke="#fff"><path d="M2 2.500Q6-.5 10 2.500M2 13.500q4 3 8 0" /><rect x=".6" y="4.600" width="7" height="7" rx="1" strokeWidth="1.200" /><path d="M7.600 7.500L11 5.500v5.200L7.600 8.800" /></svg></TrayButton>
            <TrayButton aria-label="Network"><svg width="16" height="14" viewBox="0 0 16 14" fill="none" stroke="#fff"><path d="M6 1.500h9.500v8H4.500V6M10 9.500v3.500M6.500 13.500h7M.5.500h4v4h-4zM2.500 4.500V13" /></svg></TrayButton>
            <TrayButton aria-label="Volume"><svg width="17" height="14" viewBox="0 0 17 14" fill="none" stroke="#fff"><path d="M.5 4.500h2.700l3.300-3v11l-3.300-3H.5zM8.500 4.500q1.800 2.500 0 5M10.800 2.800q3.200 4.200 0 8.400M13 1.200q4.500 5.800 0 11.600" /></svg></TrayButton>
            <Clock>3:20 PM<br />3/24/2025</Clock>
            <TrayButton aria-label="Notifications" $w={48}><svg width="16" height="16" viewBox="0 0 16 16"><path d="M.6.600h14.800v11.800H11L8 15.300 5 12.400H.6z" fill="none" stroke="#fff" strokeWidth="1.200" /></svg></TrayButton>
            <ShowDesktop aria-label="Show desktop" />
          </Tray>
        </Taskbar>
      </Screen>
    </>
  );
}
